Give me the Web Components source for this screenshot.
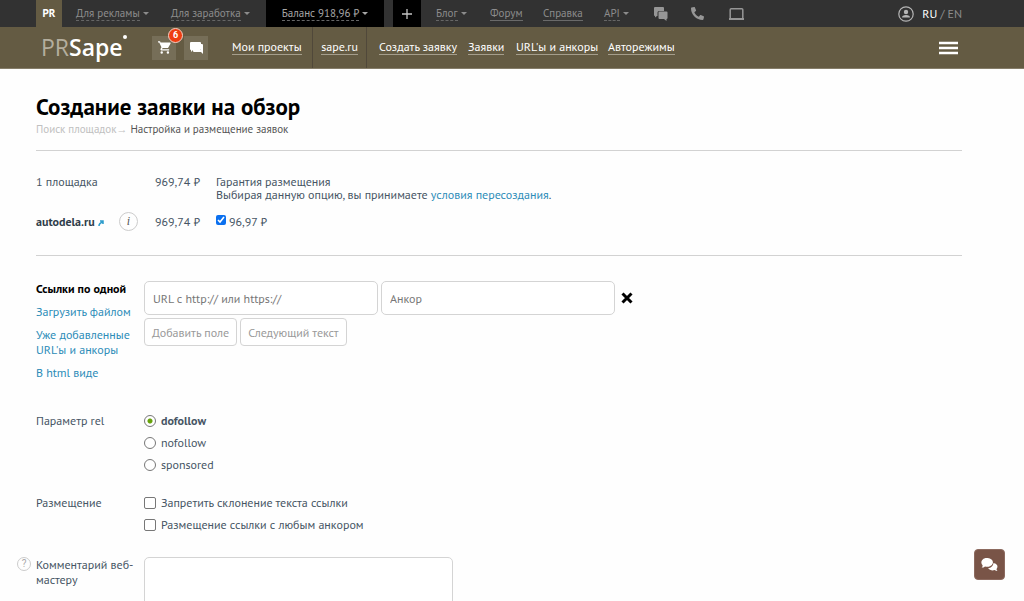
<!DOCTYPE html>
<html lang="ru">
<head>
<meta charset="utf-8">
<meta name="viewport" content="width=device-width">
<title>Создание заявки на обзор</title>
<style>
  html, body { margin: 0; background: #fefefe; }
  body {
    --gutter-left: 36px; --gutter-right: 62px; --link: #2c8cb8; --line: #d2d2d2;
    font: 12px/15px "PT Sans", Roboto, "Liberation Sans", sans-serif; color: #465564;
    height: 100vh; overflow: hidden;
  }
</style>
</head>
<body>
<top-bar></top-bar>
<project-bar></project-bar>
<main>
  <page-heading>
    Создание заявки на обзор
    <a slot="parent" href="#" style="color:#c0c0c0;text-decoration:none">Поиск площадок</a>
    <span slot="current">Настройка и размещение заявок</span>
  </page-heading>
  <order-summary></order-summary>
  <link-editor></link-editor>
  <choice-group type="radio" name="rel" options="dofollow|nofollow|sponsored" checked="0">Параметр rel</choice-group>
  <choice-group type="checkbox" name="placement" options="Запретить склонение текста ссылки|Размещение ссылки с любым анкором">Размещение</choice-group>
  <comment-field>Комментарий веб-мастеру</comment-field>
</main>
<chat-button></chat-button>

<script>
function define(name, render) {
  customElements.define(name, class extends HTMLElement {
    constructor() {
      super();
      this.attachShadow({ mode: "open" });
    }
    connectedCallback() {
      this.shadowRoot.innerHTML = "<style>*{box-sizing:border-box}a{color:inherit;text-decoration:none}</style>" + render(this);
    }
  });
}

define("top-bar", () => `
<style>
  :host { display: block; background: #323232; color: #8c8c8c; font-size: 11px; }
  nav { display: flex; align-items: center; height: 27px; padding: 0 var(--gutter-right) 0 var(--gutter-left); white-space: nowrap; }
  a { display: flex; align-items: center; }
  .pr { background: #645b43; color: #fff; font-weight: bold; width: 26px; height: 27px; justify-content: center; margin-right: 14px; }
  .t { line-height: 13px; border-bottom: 1px dashed #666; }
  .t.solid { border-bottom: 1px solid #6a6a6a; }
  .menu::after { content: ""; border: 3px solid transparent; border-top-color: currentColor; border-bottom: 0; margin-left: 3px; }
  .wide { width: 95px; }
  .balance, .plus { background: #000; color: #a6a6a6; height: 27px; justify-content: center; }
  .balance { width: 118px; margin-right: 9px; }
  .plus { width: 28px; margin-right: 15px; }
  .blog { width: 54px; } .forum { width: 53px; } .help { width: 61px; } .api { width: 49px; }
  .icon { width: 38px; }
  .user { margin-left: auto; margin-right: 8px; }
  .lang { gap: 3px; display: flex; font-size: 12px; } .lang b { color: #fff; font-weight: 500; }
  svg { display: block; }
</style>
<nav aria-label="Сервисы">
  <a class="pr" href="#">PR</a>
  <a class="menu wide" href="#"><span class="t">Для рекламы</span></a>
  <a class="menu wide" href="#"><span class="t">Для заработка</span></a>
  <a class="menu balance" href="#"><span class="t">Баланс 918,96 ₽</span></a>
  <a class="plus" href="#" aria-label="Пополнить"><svg width="12" height="12" stroke="#c4c4c4" stroke-width="1.3"><path d="M6 1v10M1 6h10"/></svg></a>
  <a class="menu blog" href="#"><span class="t">Блог</span></a>
  <a class="forum" href="#"><span class="t solid">Форум</span></a>
  <a class="help" href="#"><span class="t solid">Справка</span></a>
  <a class="menu api" href="#"><span class="t">API</span></a>
  <a class="icon" href="#" aria-label="Сообщения"><svg width="16" height="14" fill="#969696"><path d="M2 0h8q1 0 1 1v3H6q-1.500 0-1.500 1.500V9H4L2 10.500V9Q1 9 1 8V1Q1 0 2 0z"/><path d="M6.500 4.600h7q1 0 1 1V11q0 1-1 1v2l-2.500-2H6.500q-1 0-1-1V5.600q0-1 1-1z"/></svg></a>
  <a class="icon" href="#" aria-label="Телефон"><svg width="13" height="13" viewBox="0 0 512 512" fill="#969696"><path transform="matrix(-1 0 0 1 512 0)" d="M493.4 24.6l-104-24c-11.300-2.600-22.900 3.300-27.500 13.900l-48 112c-4.200 9.800-1.400 21.300 6.900 28l60.600 49.600c-36 76.700-98.900 140.500-177.200 177.200l-49.600-60.600c-6.800-8.300-18.200-11.100-28-6.900l-112 48C3.900 366.500-2 378.100.6 389.400l24 104C27.100 504.200 36.700 512 48 512c256.100 0 464-207.500 464-464 0-11.200-7.700-20.900-18.600-23.400z"/></svg></a>
  <a class="icon" href="#" aria-label="Приложение"><svg width="15" height="12" fill="none" stroke="#969696"><rect x="1.200" y=".8" width="12.600" height="10" rx="1" stroke-width="1.500"/><path d="M0 11h15" stroke-width="2"/></svg></a>
  <a class="user" href="#" aria-label="Профиль"><svg width="16" height="16" fill="#b5b5b5"><circle cx="8" cy="8" r="7.200" fill="none" stroke="#b5b5b5" stroke-width="1.200"/><circle cx="8" cy="6" r="2.200"/><path d="M4 11.600q0-2.600 4-2.600t4 2.600z"/></svg></a>
  <span class="lang"><b>RU</b><span>/</span><a href="#">EN</a></span>
</nav>`);

define("project-bar", () => `
<style>
  :host { display: block; background: #645b43; color: #fff; border-bottom: 1px solid #857d69; }
  nav { display: flex; align-items: center; height: 41px; padding: 0 var(--gutter-right) 0 41px; white-space: nowrap; font-weight: 500; }
  .logo { position: relative; width: 111px; font: 400 23px/25px "Open Sans", "Noto Sans", sans-serif; }
  .logo .p { color: #b4ae9e; font-weight: 400; } .logo .s { font-weight: 600; }
  .logo::after { content: ""; position: absolute; left: 82px; top: 0; width: 4px; height: 4px; border-radius: 50%; background: #fff; }
  .tile { position: relative; width: 24px; height: 24px; background: #766e58; display: grid; place-items: center; margin-right: 8px; }
  .tile.last { margin-right: 24px; }
  .badge { position: absolute; left: 16px; top: -8px; width: 15px; height: 15px; border-radius: 50%; background: #ee3d11; border: 1px solid #f8cfc4; font: bold 9px/13px Roboto, sans-serif; text-align: center; }
  .t { line-height: 14px; border-bottom: 1px solid #a59e8c; }
  .cell { display: flex; align-items: center; height: 41px; }
  .projects { width: 81px; border-right: 1px solid #50483a; }
  .site { width: 54px; justify-content: center; border-right: 1px solid #50483a; margin-right: 12px; }
  .create { width: 89px; } .orders { width: 48px; } .urls { width: 92px; }
  button { margin-left: auto; margin-right: 2px; width: 21px; height: 16px; padding: 0; border: 0; background: none; color: #fff; }
  svg { display: block; }
</style>
<nav aria-label="Проекты">
  <a class="logo" href="#"><span class="p">PR</span><span class="s">Sape</span></a>
  <a class="tile" href="#" aria-label="Корзина"><svg width="13" height="13" viewBox="1 2 21 20" fill="#fff"><path d="M7 18a2 2 0 1 0 0 4 2 2 0 0 0 0-4zM1 2v2h2l3.600 7.600L5.200 14C4.500 15.400 5.500 17 7 17h12v-2H7.400l1.100-2h7.500q1.200 0 1.700-1L21.300 5.500Q21.800 4 20.400 4H5.200l-.9-2zM17 18a2 2 0 1 0 0 4 2 2 0 0 0 0-4z"/></svg><span class="badge">6</span></a>
  <a class="tile last" href="#" aria-label="Сообщения"><svg width="13" height="12" fill="#fff"><path d="M1 0h9q1 0 1 1v6q0 1-1 1H3L1 10V8H1Q0 8 0 7V1Q0 0 1 0z"/><path d="M11 2h1q1 0 1 1v9l-2-2H4q-1 0-1-1V8h7q1 0 1-1z"/></svg></a>
  <a class="cell projects" href="#"><span class="t">Мои проекты</span></a>
  <a class="cell site" href="#"><span class="t">sape.ru</span></a>
  <a class="cell create" href="#"><span class="t">Создать заявку</span></a>
  <a class="cell orders" href="#"><span class="t">Заявки</span></a>
  <a class="cell urls" href="#"><span class="t">URL'ы и анкоры</span></a>
  <a class="cell" href="#"><span class="t">Авторежимы</span></a>
  <button aria-label="Меню"><svg width="19" height="14" stroke="#fff" stroke-width="2.600"><path d="M0 2h19M0 7h19M0 12h19"/></svg></button>
</nav>`);

define("page-heading", () => `
<style>
  :host { display: block; margin: 23px var(--gutter-right) 0 var(--gutter-left); padding-bottom: 14px; border-bottom: 1px solid var(--line); }
  h1 { margin: 0; font-size: 23px; line-height: 30px; color: #000; }
  nav { font-size: 11px; line-height: 14px; color: #c0c0c0; }
  .now { color: #555; }
</style>
<h1><slot></slot></h1>
<nav aria-label="Путь"><slot name="parent"></slot>→ <span class="now"><slot name="current"></slot></span></nav>`);

define("order-summary", () => `
<style>
  :host { display: block; margin: 0 var(--gutter-right) 0 var(--gutter-left); padding: 24px 0; border-bottom: 1px solid var(--line); }
  table { border-collapse: collapse; table-layout: fixed; width: 100%; line-height: 13px; }
  td { padding: 0; vertical-align: top; }
  .name { width: 83px; } .info { width: 36px; } .price { width: 61px; }
  .second td { height: 30px; padding-top: 10px; vertical-align: middle; }
  b { color: #2f3d4a; } .link { color: var(--link); }
  .i { width: 19px; height: 19px; padding: 0; border: 1px solid #ccc; border-radius: 50%; background: none; font: italic 12px/16px "Liberation Serif", serif; color: #555; display: block; }
  label { display: flex; align-items: center; }
  input { width: 10px; height: 10px; margin: 0 3px 2px 0; accent-color: #0b70ef; }
</style>
<table>
  <tr><td class="name">1 площадка</td><td class="info"></td><td class="price">969,74 ₽</td><td><div>Гарантия размещения</div><div>Выбирая данную опцию, вы принимаете <a class="link" href="#">условия пересоздания</a>.</div></td></tr>
  <tr class="second"><td><b>autodela.ru</b> <svg width="6" height="6" fill="none" stroke="#2c9ccc" stroke-width="1.500"><path d="M1 6q0-3 4-4M2 1h3v3"/></svg></td>
  <td><button class="i" aria-label="Информация">i</button></td><td>969,74 ₽</td>
  <td><label><input type="checkbox" checked>96,97 ₽</label></td></tr>
</table>`);

define("link-editor", () => `
<style>
  :host { display: flex; margin: 25px var(--gutter-right) 0 var(--gutter-left); }
  nav { width: 108px; flex: none; display: flex; flex-direction: column; gap: 8px; padding-bottom: 1px; color: var(--link); line-height: 15px; }
  nav b { color: #000; }
  .work { flex: 1; }
  .row { display: flex; align-items: center; gap: 3px; margin-bottom: 3px; }
  input { flex: 0 1 234px; min-width: 0; height: 34px; padding: 0 8px; border: 1px solid #d4d4d4; border-radius: 5px; background: #fff; font: inherit; }
  input::placeholder { color: #777; }
  .row button { height: 28px; padding: 0 7px; border: 1px solid #d4d4d4; border-radius: 4px; background: #fff; color: #999; font: inherit; }
  .row .x { border: 0; padding: 0 3px; background: none; }
  svg { display: block; }
</style>
<nav aria-label="Способ добавления ссылок"><b>Ссылки по одной</b><a href="#">Загрузить файлом</a><a href="#">Уже добавленные<br>URL'ы и анкоры</a><a href="#">В html виде</a></nav>
<div class="work">
  <div class="row"><input aria-label="URL" placeholder="URL с http:// или https://"><input aria-label="Анкор" placeholder="Анкор"><button class="x" aria-label="Удалить"><svg width="12" height="12" stroke="#000" stroke-width="3"><path d="M1.500 1.500l9 9M10.500 1.500l-9 9"/></svg></button></div>
  <div class="row"><button>Добавить поле</button><button>Следующий текст</button></div>
</div>`);

define("choice-group", el => {
  const type = el.getAttribute("type");
  const options = el.getAttribute("options").split("|").map((text, i) =>
    `<label><input type="${type}" name="${el.getAttribute("name")}"${String(i) === el.getAttribute("checked") ? " checked" : ""}><span>${text}</span></label>`).join("");
  return `
<style>
  :host { display: flex; margin: 0 var(--gutter-right) 0 var(--gutter-left); padding-top: 32px; line-height: 16px; }
  :host([type=checkbox]) { padding-top: 22px; }
  .title { width: 108px; flex: none; }
  .items { display: grid; row-gap: 6px; }
  label { display: flex; align-items: center; gap: 5px; }
  input { appearance: none; width: 12px; height: 12px; margin: 0; border: 1px solid #777; background: #fff; border-radius: 2px; }
  input[type=radio] { border-radius: 50%; }
  input[type=radio]:checked { background: radial-gradient(circle, #67a30a 0 2px, #fff 3px); }
  input:checked + span { font-weight: bold; }
</style>
<div class="title" id="title"><slot></slot></div>
<div class="items" role="${type === "radio" ? "radiogroup" : "group"}" aria-labelledby="title">${options}</div>`;
});

define("comment-field", () => `
<style>
  :host { display: flex; margin: 24px var(--gutter-right) 0 17px; line-height: 15px; }
  .help { flex: none; width: 14px; height: 14px; margin-right: 5px; padding: 0; border: 1px solid #ccc; border-radius: 50%; background: none; color: #aaa; font: 10px/12px Roboto, sans-serif; }
  label { width: 104px; margin-right: 4px; flex: none; }
  textarea { flex: 0 1 309px; height: 80px; border: 1px solid #d4d4d4; border-radius: 5px; background: #fff; resize: none; font: inherit; }
</style>
<button class="help" aria-label="Подсказка">?</button>
<label for="comment"><slot></slot></label>
<textarea id="comment"></textarea>`);

define("chat-button", () => `
<style>
  :host { position: fixed; right: 19px; bottom: 21px; }
  button { display: grid; place-items: center; width: 31px; height: 31px; padding: 0; border: 1px solid #8c6a5f; border-radius: 4px; background: #795447; }
</style>
<button aria-label="Чат"><svg width="18" height="14" fill="#fff"><path d="M12.500 5a4.500 3.800 0 0 1 3 6.200q.2 1.200 1 1.800-1.500.1-2.700-1A5.500 4.200 0 0 1 7 10.300Q12 9.500 12.500 5z"/><path d="M6 0a5.600 4.400 0 1 1-2 8.400Q2.500 9.700.6 9.600 1.700 8.500 1.600 7.200A5 4.400 0 0 1 6 0z"/></svg></button>`);
</script>
</body>
</html>
